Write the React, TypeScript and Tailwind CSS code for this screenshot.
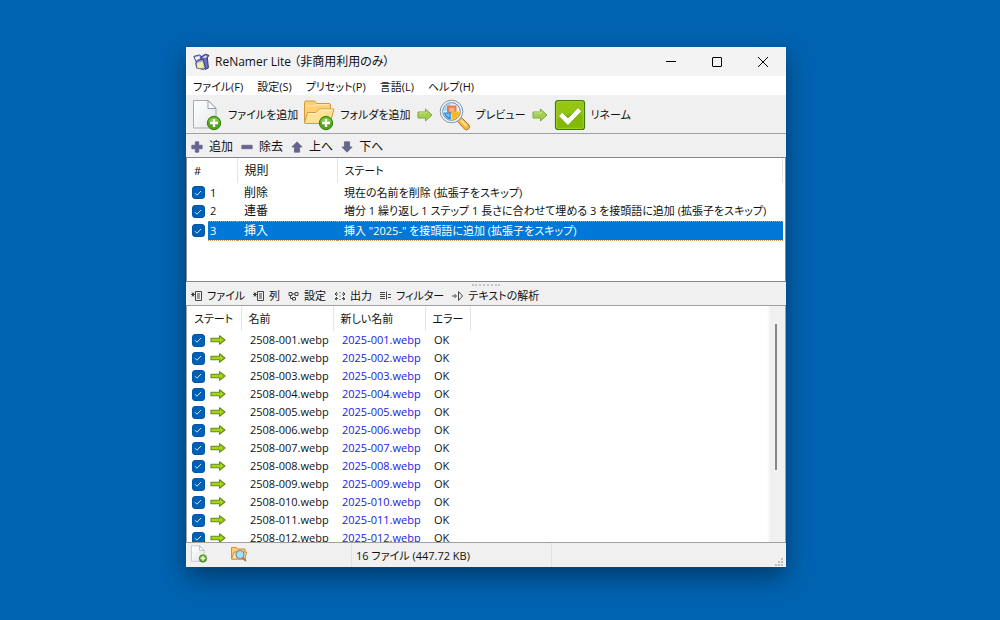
import { useState } from 'react';
import type { ReactNode } from 'react';
import clsx from 'clsx';

const menus = ['ファイル(F)', '設定(S)', 'プリセット(P)', '言語(L)', 'ヘルプ(H)'];

const rules = [
  { id: 1, name: '削除', state: '現在の名前を削除 (拡張子をスキップ)' },
  { id: 2, name: '連番', state: '増分 1 繰り返し 1 ステップ 1 長さに合わせて埋める 3 を接頭語に追加 (拡張子をスキップ)' },
  { id: 3, name: '挿入', state: '挿入 "2025-" を接頭語に追加 (拡張子をスキップ)' },
];

const files = Array.from({ length: 12 }, (_, i) => {
  const no = String(i + 1).padStart(3, '0');
  return { before: `2508-${no}.webp`, after: `2025-${no}.webp` };
});

/* ---------- icons ---------- */

function AppIcon() {
  return (
    <svg viewBox="0 0 16 16" className="h-[17px] w-[17px] shrink-0">
      <path d="M.8 3.200 6 1.800l3 2.200-2.500 3-3.500 1.500z" fill="#a9a9de" stroke="#3f3f78" strokeWidth=".9" />
      <path d="m1.800 4 4-1 1 1.800-4 1.800z" fill="#f4f4ff" />
      <path d="m7 4 4.500-2.800 3.500 1-1.500 2.300 1 9.500-3 1.500-2.500-8z" fill="#6d70bd" stroke="#2f2f66" strokeWidth=".9" />
      <path d="m8.800 4.300 3-2 1.700.5-1.700 1.900z" fill="#dcdcf7" />
      <path d="m2.500 9.500 2-2.500 5-1.200 2.300 8.200-2 1.500-6.300-1.500z" fill="#a3a5dc" stroke="#3b3b74" strokeWidth=".9" />
      <path d="m4 9.300 5-1.300 1.300 5.300-4 1.200-2.500-1z" fill="#f3f0a0" />
    </svg>
  );
}

function PlusBadge() {
  return (
    <g>
      <circle cx="23" cy="24" r="6.700" fill="#55a51c" stroke="#39800e" strokeWidth="1" />
      <path d="M17.500 23a5.600 5.600 0 0 1 11 0q-5.500 2-11 0z" fill="#8fd04a" opacity=".75" />
      <path d="M21.800 20h2.400v2.800H27v2.400h-2.800V28h-2.400v-2.800H19v-2.400h2.800z" fill="#fff" />
    </g>
  );
}

function AddFileIcon({ className }: { className: string }) {
  return (
    <svg viewBox="0 0 32 32" className={className}>
      <defs>
        <linearGradient id="sheet" x1="0" y1="0" x2="1" y2="1">
          <stop offset="0" stopColor="#fff" />
          <stop offset="1" stopColor="#e3e7ea" />
        </linearGradient>
      </defs>
      <path d="M2.500 1.500h14.500l8 8v19.500H2.500z" fill="url(#sheet)" stroke="#a5aab0" strokeWidth="1" />
      <path d="M17 1.500v8h8z" fill="#fff" stroke="#979ca2" strokeWidth="1" strokeLinejoin="round" />
      <PlusBadge />
    </svg>
  );
}

function AddFolderIcon() {
  return (
    <svg viewBox="0 0 32 32" className="h-8 w-8 shrink-0">
      <path d="M1.500 24V3.500q0-1.500 1.500-1.500h8q1.500 0 2 1.500l.5 1H26q1.500 0 1.500 1.500v18z" fill="#ffcf70" stroke="#d19a40" strokeWidth="1" />
      <path d="M3 7h9l1.500-1.200H26" fill="none" stroke="#fff0b8" strokeWidth="1" />
      <path d="M1.500 24 4.500 13.500h8.500l3.500-3.500h14.500L27 24.500H2.500z" fill="#ffe193" stroke="#d19a40" strokeWidth="1" strokeLinejoin="round" />
      <path d="M5.500 14.500h8l3.500-3.500h12.500" fill="none" stroke="#fff6cf" strokeWidth="1" />
      <PlusBadge />
    </svg>
  );
}

function StepArrow() {
  return (
    <svg viewBox="0 0 16 14" className="h-3.5 w-4 shrink-0">
      <path d="M1 4h7.500V1l6.500 6-6.500 6v-3H1z" fill="#a3d04d" stroke="#7fa84c" strokeWidth="1" strokeLinejoin="round" />
      <path d="M2 5h7.500V3.300" fill="none" stroke="#c9e695" strokeWidth="1" />
    </svg>
  );
}

function PreviewIcon() {
  return (
    <svg viewBox="0 0 32 32" className="h-8 w-8 shrink-0">
      <path d="m20 20.500 2.500-2 7.500 7.500q1.500 2-.5 4t-4 0L18.500 22.500z" fill="#f5b53b" stroke="#b07a30" strokeWidth="1" />
      <path d="m22 21.500 5.500 5.500" stroke="#ffe49a" strokeWidth="2" />
      <circle cx="12.500" cy="12.500" r="11.300" fill="#eef2f6" stroke="#8594a6" strokeWidth="1" />
      <circle cx="12.500" cy="12.500" r="8.800" fill="#e4f3fc" stroke="#71869d" strokeWidth="1" />
      <path d="M4.500 12q.5-7 7-7.700v4.200H8V12z" fill="#a6d8f7" />
      <path d="M8 6.500h9.500v8H8z" fill="#f0774a" />
      <path d="M10.200 8.700h5.300v4h-5.300z" fill="#f9b28d" />
      <path d="M4.800 13.500h7v7q-6-1-7-7z" fill="#2d8edb" />
      <path d="M6.500 14.800h4v3.500q-3-.8-4-3.500z" fill="#7cc3f2" />
      <path d="M12.500 12.500H20V17q-2 3-7.500 3.700z" fill="#fdb926" />
    </svg>
  );
}

function RenameIcon() {
  return (
    <svg viewBox="0 0 32 32" className="h-8 w-8 shrink-0">
      <rect x="1.500" y="1.500" width="29" height="29" rx="2.500" fill="#83b804" stroke="#3d7d0b" strokeWidth="1.200" />
      <path d="M3 3h26v13Q16 11 3 20z" fill="#9bcc14" opacity=".7" />
      <rect x="2.700" y="2.700" width="26.600" height="26.600" rx="1.500" fill="none" stroke="#abd63c" strokeWidth=".8" />
      <path d="m4.500 17 3.700-3.700 5.800 5.700L24 8.500l3.700 3.700L14 26.500z" fill="#fff" stroke="#6da30c" strokeWidth=".8" />
    </svg>
  );
}

function FileArrow() {
  return (
    <svg viewBox="0 0 16 10" className="block h-2.5 w-4">
      <path d="M1 3.300h8.500V.8L15 5 9.500 9.200V6.700H1z" fill="#a5d611" stroke="#64881f" strokeWidth="1.100" strokeLinejoin="round" />
    </svg>
  );
}

function FolderSearchIcon() {
  return (
    <svg viewBox="0 0 18 18" className="h-[18px] w-[18px]">
      <path d="M1.500 14V2.500h5l1 1.500H15v10z" fill="#ffcf78" stroke="#cf8f3a" strokeWidth="1" />
      <path d="M1.500 14 4 7h12.500L15 14z" fill="#ffe3a4" stroke="#cf8f3a" strokeWidth="1" />
      <path d="m12.500 12.500 3.500 3.500" stroke="#b9793a" strokeWidth="2" />
      <circle cx="10" cy="9.500" r="4" fill="#a9dcf5" stroke="#6d8da8" strokeWidth="1.200" />
    </svg>
  );
}

const ruleIconPaths = {
  add: 'M4 0h4v4h4v4H8v4H4V8H0V4h4z',
  remove: 'M0 4h12v4H0z',
  up: 'M6 0l6 6H9v6H3V6H0z',
  down: 'M6 12L0 6h3V0h6v6h3z',
};

function RuleIcon({ kind }: { kind: keyof typeof ruleIconPaths }) {
  return (
    <svg viewBox="-1 -1 14 14" className="h-3 w-3 shrink-0">
      <path d={ruleIconPaths[kind]} fill="#66638e" stroke="#66638e" strokeWidth="1" strokeLinejoin="round" />
    </svg>
  );
}

const tabIcons: Record<string, ReactNode> = {
  list: <path d="M4.500 1.500h6v9h-6zM6 4h3M6 6h3M6 8h3M0 4.500h4M1 2.500l2 4M3 2.500l-2 4" />,
  settings: <path d="M1 2.500h3v3H1zM7 2.500h3v3H7zM4.500 7.500h3v2.500h-3zM4 4h3M2.500 6v2.500h2" />,
  export: <path d="M3 2 1 4l2 2M9 2l2 2-2 2M1 4h3M8 4h3M3 7 1 9l2 1M9 7l2 2-2 1M1 8.500h3M8 8.500h3M6 2v1M6 5.500v1M6 9v1" />,
  filter: <path d="M0 2.500h5M0 4.500h5M0 6.500h5M0 8.500h5M6.500 1.500v8M8 4.500h3M8 7.500h3" />,
  analyze: <path d="M0 6h4M2.500 4l2 2-2 2M6.500 1.500v9l4-4.500z" />,
};

const tabs = [
  { name: 'ファイル', icon: 'list' },
  { name: '列', icon: 'list' },
  { name: '設定', icon: 'settings' },
  { name: '出力', icon: 'export' },
  { name: 'フィルター', icon: 'filter' },
  { name: 'テキストの解析', icon: 'analyze' },
];

/* ---------- controls ---------- */

function Check({ label }: { label: string }) {
  const [checked, setChecked] = useState(true);
  return (
    <span className="grid h-3.5 w-3.5 place-items-center">
      <input
        type="checkbox"
        aria-label={label}
        checked={checked}
        onChange={(e) => setChecked(e.target.checked)}
        className="col-start-1 row-start-1 h-[13px] w-[13px] appearance-none rounded-[3px] border border-[#0057a5] checked:bg-[#005fb8]"
      />
      {checked && (
        <svg viewBox="0 0 12 12" className="pointer-events-none col-start-1 row-start-1 h-3 w-3">
          <path d="m3 6.200 2 2 4-4.200" fill="none" stroke="#d5e8fa" strokeWidth="1" />
        </svg>
      )}
    </span>
  );
}

function TitleBar() {
  return (
    <header className="flex h-[29px] shrink-0 items-center bg-[#f3f3f3] pl-[7px]">
      <AppIcon />
      <h1 className="ml-[5px] flex-1 truncate text-[12px]">ReNamer Lite （非商用利用のみ）</h1>
      <button aria-label="最小化" className="grid h-full w-[46px] place-items-center">
        <svg viewBox="0 0 10 10" className="h-2.5 w-2.5" stroke="#000"><path d="M0 4.500h10" /></svg>
      </button>
      <button aria-label="最大化" className="grid h-full w-[46px] place-items-center">
        <svg viewBox="0 0 10 10" className="h-2.5 w-2.5" fill="none" stroke="#000"><rect x=".5" y=".5" width="9" height="9" rx=".5" /></svg>
      </button>
      <button aria-label="閉じる" className="grid h-full w-[46px] place-items-center">
        <svg viewBox="0 0 10 10" className="h-2.5 w-2.5" stroke="#000"><path d="m0 0 10 10M10 0 0 10" /></svg>
      </button>
    </header>
  );
}

function MainToolbar() {
  return (
    <div className="flex h-[39px] shrink-0 items-center border-b border-[#a0a0a0] bg-[#f0f0f0] pl-[5px] pt-0.5">
      <button className="flex items-center gap-[5px]">
        <AddFileIcon className="h-8 w-8 shrink-0" />
        ファイルを追加
      </button>
      <button className="ml-[5px] flex items-center gap-[5px]">
        <AddFolderIcon />
        フォルダを追加
      </button>
      <span className="mx-1.5"><StepArrow /></span>
      <button className="flex items-center gap-[5px]">
        <PreviewIcon />
        プレビュー
      </button>
      <span className="mx-1.5"><StepArrow /></span>
      <button className="flex items-center gap-[5px]">
        <RenameIcon />
        リネーム
      </button>
    </div>
  );
}

function RuleToolbar() {
  return (
    <div className="flex h-[23px] shrink-0 items-center gap-2 bg-[#f0f0f0] pl-[5px] pt-0.5 text-[12px]">
      <button className="flex items-center gap-1.5"><RuleIcon kind="add" />追加</button>
      <button className="flex items-center gap-1.5"><RuleIcon kind="remove" />除去</button>
      <button className="flex items-center gap-1.5"><RuleIcon kind="up" />上へ</button>
      <button className="flex items-center gap-1.5"><RuleIcon kind="down" />下へ</button>
    </div>
  );
}

function RuleList() {
  const [selected, setSelected] = useState(3);
  return (
    <div className="h-[125px] shrink-0 overflow-hidden border border-[#828790] bg-white pr-0.5">
      <table className="w-full table-fixed border-collapse text-left">
        <colgroup>
          <col className="w-[21px]" />
          <col className="w-[29px]" />
          <col className="w-[100px]" />
          <col />
        </colgroup>
        <thead>
          <tr className="h-[25px]">
            <th colSpan={2} className="border-r border-[#e5e5e5] pl-[7px] font-normal">#</th>
            <th className="border-r border-[#e5e5e5] pl-[7px] text-[12px] font-normal">規則</th>
            <th className="border-r border-[#e5e5e5] pl-[7px] font-normal">ステート</th>
          </tr>
        </thead>
        <tbody>
          {rules.map((rule) => {
            const cell = clsx(
              'whitespace-nowrap p-0',
              selected === rule.id && 'border-y border-dotted border-[#c9925a] bg-[#0078d7] text-white'
            );
            return (
              <tr key={rule.id} className="h-[19px]" onClick={() => setSelected(rule.id)}>
                <td className="p-0 pl-1"><Check label={rule.name} /></td>
                <td className={clsx(cell, 'pl-0.5')}>{rule.id}</td>
                <td className={clsx(cell, 'pl-[7px] text-[12px]')}>{rule.name}</td>
                <td className={clsx(cell, 'pl-[7px]')}>{rule.state}</td>
              </tr>
            );
          })}
        </tbody>
      </table>
    </div>
  );
}

function FileToolbar() {
  return (
    <div className="relative flex h-[23px] shrink-0 items-center gap-2 bg-[#f0f0f0] pl-[5px] pt-1">
      {/* splitter grip */}
      <span className="absolute left-1/2 top-0.5 w-7 -translate-x-1/2 border-t-2 border-dotted border-[#c4c4c4]" />
      {tabs.map((tab) => (
        <button key={tab.name} className="flex items-center gap-1">
          <svg viewBox="0 0 12 12" className="h-3 w-3 shrink-0" fill="none" stroke="#444" strokeWidth="1">
            {tabIcons[tab.icon]}
          </svg>
          {tab.name}
        </button>
      ))}
    </div>
  );
}

function FileList() {
  return (
    <div className="flex min-h-0 flex-1 border border-[#a0a0a0] bg-white">
      <div className="min-w-0 flex-1 overflow-hidden">
        <table className="w-full table-fixed border-collapse text-left">
          <colgroup>
            <col className="w-[54px]" />
            <col className="w-[92px]" />
            <col className="w-[92px]" />
            <col className="w-[45px]" />
            <col />
          </colgroup>
          <thead>
            <tr className="h-[25px]">
              {['ステート', '名前', '新しい名前', 'エラー'].map((name) => (
                <th key={name} className="whitespace-nowrap border-r border-[#e5e5e5] p-0 pl-[7px] font-normal">{name}</th>
              ))}
              <th />
            </tr>
          </thead>
          <tbody>
            {files.map((file) => (
              <tr key={file.before} className="h-[18px] whitespace-nowrap">
                <td className="p-0 pl-1">
                  <div className="flex items-center gap-[5px]">
                    <Check label={file.before} />
                    <FileArrow />
                  </div>
                </td>
                <td className="p-0 pl-[9px]">{file.before}</td>
                <td className="p-0 pl-[9px] text-[#1a1ae0]">{file.after}</td>
                <td className="p-0 pl-[9px]">OK</td>
                <td />
              </tr>
            ))}
          </tbody>
        </table>
      </div>
      <div className="flex w-[18px] justify-center bg-linear-to-r from-white to-[#f0f0f0] to-20% pt-[18px]">
        <div className="h-[67%] w-0.5 bg-[#868686]" />
      </div>
    </div>
  );
}

function StatusBar() {
  return (
    <footer className="flex h-6 shrink-0 items-center bg-[#f0f0f0]">
      <div className="flex h-full w-[166px] items-center gap-[22px] border-r border-[#e2e2e2] pb-0.5 pl-1">
        <button aria-label="ファイルを追加"><AddFileIcon className="block h-[18px] w-[18px]" /></button>
        <button aria-label="フォルダを検索"><FolderSearchIcon /></button>
      </div>
      <div className="flex h-full w-[200px] items-center border-r border-[#e2e2e2] pl-1 pt-0.5">16 ファイル (447.72 KB)</div>
      <svg viewBox="0 0 10 10" className="ml-auto mr-0.5 h-2.5 w-2.5 self-end" fill="#bdbdbd">
        <path d="M7 1h2v2H7zM7 4h2v2H7zM7 7h2v2H7zM4 4h2v2H4zM4 7h2v2H4zM1 7h2v2H1z" />
      </svg>
    </footer>
  );
}

export default function App() {
  return (
    <div className="flex h-screen bg-[#0063b1] pb-[53px] pl-[186px] pr-[214px] pt-[47px] font-['Open_Sans','Noto_Sans_CJK_JP',sans-serif] text-[11px] leading-4 text-[#111] [font-feature-settings:'palt']">
      <main className="flex min-w-0 flex-1 flex-col bg-[#f0f0f0] shadow-[0_10px_24px_rgba(0,0,0,0.4)]">
        <TitleBar />
        <nav className="flex h-[19px] shrink-0 items-center gap-3.5 bg-white pl-[7px] pt-0.5">
          {menus.map((menu) => (
            <button key={menu}>{menu}</button>
          ))}
        </nav>
        <MainToolbar />
        <RuleToolbar />
        <RuleList />
        <FileToolbar />
        <FileList />
        <StatusBar />
      </main>
    </div>
  );
}
